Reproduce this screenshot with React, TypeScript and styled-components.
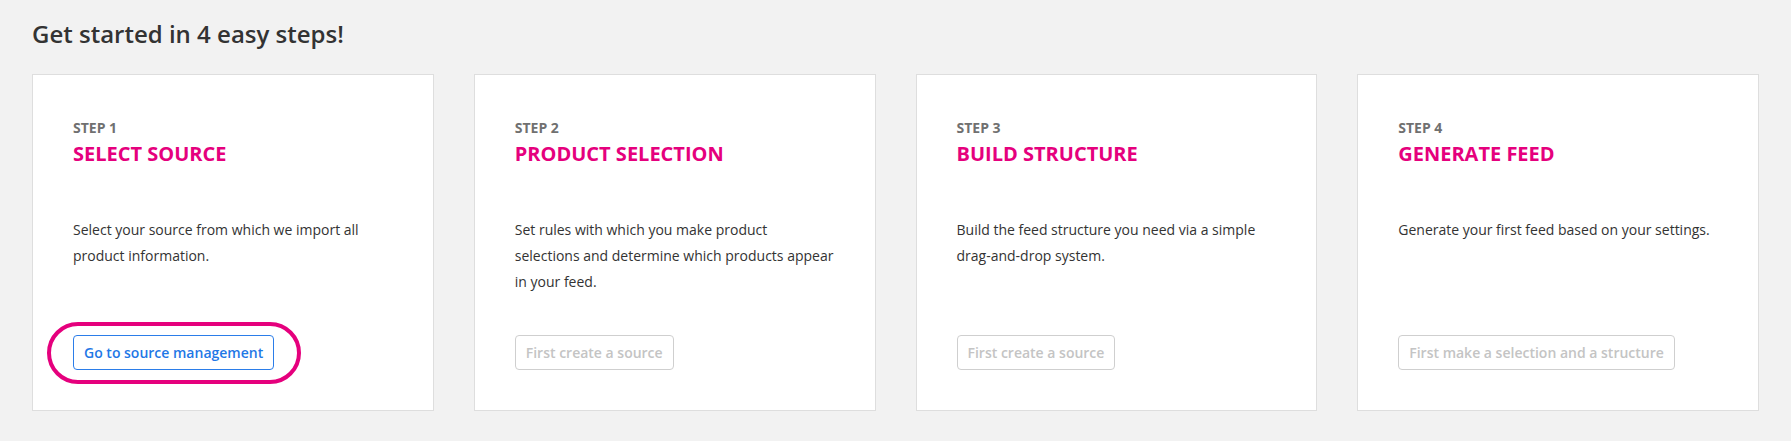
import React from 'react';
import styled, { createGlobalStyle } from 'styled-components';

const GlobalStyle = createGlobalStyle`
  html, body {
    margin: 0;
    padding: 0;
    background: #f2f2f2;
  }
  body {
    font-family: "Open Sans", "Liberation Sans", sans-serif;
    color: #333;
  }
`;

const Page = styled.div`
  padding: 19px 32px 30px;
`;

const Heading = styled.h1`
  margin: 0 0 26px;
  font-size: 24px;
  line-height: 29px;
  font-weight: 600;
  color: #333;
`;

const Steps = styled.div`
  display: grid;
  grid-template-columns: repeat(4, 1fr);
  gap: 40px;
`;

const Card = styled.div`
  display: flex;
  flex-direction: column;
  min-height: 253px;
  padding: 42px 40px 40px;
  background: #fff;
  border: 1px solid #dedede;
`;

const StepLabel = styled.div`
  font-size: 14px;
  line-height: 21px;
  font-weight: 700;
  color: #707070;
`;

const Title = styled.h2`
  margin: 4px 0 0;
  font-size: 20px;
  line-height: 24px;
  font-weight: 700;
  color: #e5007d;
`;

const Description = styled.p`
  margin: 51px 0 0;
  font-size: 14px;
  line-height: 26px;
  color: #333;
`;

const Actions = styled.div`
  margin-top: auto;
  padding-top: 20px;
  display: flex;
`;

const Highlight = styled.div`
  position: relative;
  display: inline-flex;
`;

const Ring = styled.span`
  position: absolute;
  top: -13px;
  bottom: -14px;
  left: -26px;
  right: -27px;
  border: 4px solid #e5007d;
  border-radius: 40px;
  pointer-events: none;
`;

const Button = styled.button<{ $disabled?: boolean }>`
  height: 35px;
  padding: 0 10px;
  font-family: "Open Sans", "Liberation Sans", sans-serif;
  font-size: 14px;
  font-weight: 600;
  background: #fff;
  border-radius: 4px;
  border: 1px solid ${p => (p.$disabled ? '#cfcfcf' : '#2b7de9')};
  color: ${p => (p.$disabled ? '#c4c4c4' : '#1f78e6')};
  cursor: ${p => (p.$disabled ? 'default' : 'pointer')};
`;

const steps = [
  {
    step: 'STEP 1',
    title: 'SELECT SOURCE',
    text: 'Select your source from which we import all product information.',
    action: 'Go to source management',
    active: true,
  },
  {
    step: 'STEP 2',
    title: 'PRODUCT SELECTION',
    text: 'Set rules with which you make product selections and determine which products appear in your feed.',
    action: 'First create a source',
  },
  {
    step: 'STEP 3',
    title: 'BUILD STRUCTURE',
    text: 'Build the feed structure you need via a simple drag-and-drop system.',
    action: 'First create a source',
  },
  {
    step: 'STEP 4',
    title: 'GENERATE FEED',
    text: 'Generate your first feed based on your settings.',
    action: 'First make a selection and a structure',
  },
];

export default function App() {
  return (
    <>
      <GlobalStyle />
      <Page>
        <Heading>Get started in 4 easy steps!</Heading>
        <Steps>
          {steps.map(s => (
            <Card key={s.step}>
              <StepLabel>{s.step}</StepLabel>
              <Title>{s.title}</Title>
              <Description>{s.text}</Description>
              <Actions>
                {s.active ? (
                  <Highlight>
                    <Button>{s.action}</Button>
                    <Ring />
                  </Highlight>
                ) : (
                  <Button $disabled disabled>
                    {s.action}
                  </Button>
                )}
              </Actions>
            </Card>
          ))}
        </Steps>
      </Page>
    </>
  );
}
